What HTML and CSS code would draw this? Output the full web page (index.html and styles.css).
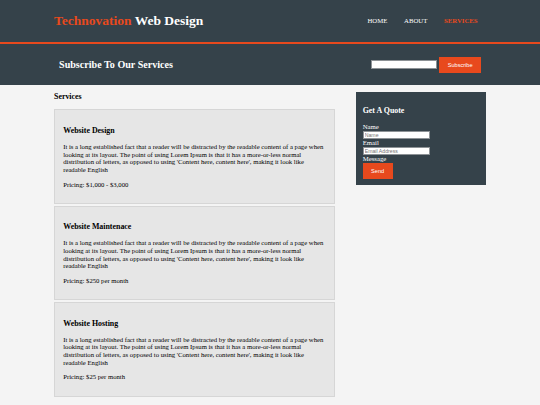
FILE: index.html
```html
<!DOCTYPE html>
<html lang="en">
<head>
<meta charset="utf-8">
<title>Technovation Web Design | Services</title>
<link rel="stylesheet" href="styles.css">
</head>
<body>
<header class="site-header">
  <div class="container header-inner">
    <div class="branding">
      <h1 class="logo"><span class="highlight">Technovation</span> Web Design</h1>
    </div>
    <nav class="main-nav">
      <ul class="nav-list">
        <li class="nav-item"><a class="nav-link" href="#">Home</a></li>
        <li class="nav-item"><a class="nav-link" href="#">About</a></li>
        <li class="nav-item"><a class="nav-link current" href="#">Services</a></li>
      </ul>
    </nav>
  </div>
</header>

<section class="newsletter">
  <div class="container newsletter-inner">
    <h1 class="newsletter-title">Subscribe To Our Services</h1>
    <form class="newsletter-form">
      <input class="email-input" type="email">
      <button class="button-1" type="button">Subscribe</button>
    </form>
  </div>
</section>

<section class="main">
  <div class="container main-inner">
    <article class="main-col">
      <h1 class="page-title">Services</h1>
      <ul class="services">
        <li class="service">
          <h3 class="service-title">Website Design</h3>
          <p class="service-text">It is a long established fact that a reader will be distracted by the readable content of a page when looking at its layout. The point of using Lorem Ipsum is that it has a more-or-less normal distribution of letters, as opposed to using 'Content here, content here', making it look like readable English</p>
          <p class="service-text">Pricing: $1,000 - $3,000</p>
        </li>
        <li class="service">
          <h3 class="service-title">Website Maintenace</h3>
          <p class="service-text">It is a long established fact that a reader will be distracted by the readable content of a page when looking at its layout. The point of using Lorem Ipsum is that it has a more-or-less normal distribution of letters, as opposed to using 'Content here, content here', making it look like readable English</p>
          <p class="service-text">Pricing: $250 per month</p>
        </li>
        <li class="service">
          <h3 class="service-title">Website Hosting</h3>
          <p class="service-text">It is a long established fact that a reader will be distracted by the readable content of a page when looking at its layout. The point of using Lorem Ipsum is that it has a more-or-less normal distribution of letters, as opposed to using 'Content here, content here', making it look like readable English</p>
          <p class="service-text">Pricing: $25 per month</p>
        </li>
      </ul>
    </article>

    <aside class="sidebar">
      <div class="dark">
        <h3 class="quote-title">Get A Quote</h3>
        <form class="quote">
          <label class="quote-label">Name</label>
          <input class="quote-input" type="text" placeholder="Name">
          <label class="quote-label">Email</label>
          <input class="quote-input" type="email" placeholder="Email Address">
          <label class="quote-label">Message</label>
          <button class="button-1 send-button" type="button">Send</button>
        </form>
      </div>
    </aside>
  </div>
</section>
</body>
</html>
```

FILE: styles.css
```css
html, body {
  margin: 0;
  padding: 0;
}

body {
  background: #f4f4f4;
  font-family: "Liberation Serif", "Times New Roman", serif;
  color: #000;
}

.container {
  width: 80%;
  margin: 0 auto;
}

/* Header */
.site-header {
  background: #35424a;
  color: #fff;
  padding-top: 12.7px;
  min-height: 29.3px;
  border-bottom: 2px solid #e8491d;
}

.header-inner {
  display: flex;
  justify-content: space-between;
  align-items: flex-start;
}

.logo {
  margin: 0;
  font-size: 13.5px;
  font-weight: bold;
  line-height: 15.5px;
}

.highlight {
  color: #e8491d;
}

.nav-list {
  display: flex;
  list-style: none;
  margin: 4.2px 0 0;
  padding: 0;
  font-size: 6.75px;
  line-height: 7.76px;
}

.nav-item {
  padding: 0 8.4px;
}

.nav-link {
  color: #fff;
  text-decoration: none;
  text-transform: uppercase;
}

.nav-link.current {
  color: #e8491d;
  font-weight: bold;
}

/* Newsletter */
.newsletter {
  background: #35424a;
  color: #fff;
  padding: 6.3px;
}

.newsletter-inner {
  display: flex;
  justify-content: space-between;
  align-items: flex-start;
}

.newsletter-title {
  margin: 8.4px 0;
  font-size: 10.1px;
  font-weight: bold;
  line-height: 11.6px;
}

.newsletter-form {
  margin-top: 6.3px;
  display: flex;
  align-items: center;
  gap: 2px;
}

.email-input {
  box-sizing: border-box;
  width: 66px;
  height: 8.4px;
  padding: 0;
  border: 1px solid #8d9296;
  background: #fff;
}

.button-1 {
  height: 16px;
  padding: 0 8.4px;
  border: 0;
  background: #e8491d;
  color: #fff;
  font-family: "Liberation Sans", Arial, sans-serif;
  font-size: 5.6px;
}

/* Main */
.main-inner {
  display: flex;
  justify-content: space-between;
  align-items: flex-start;
}

.main-col {
  width: 65%;
}

.page-title {
  margin: 7.2px 0 7.9px;
  font-size: 7.9px;
  font-weight: bold;
  line-height: 9.1px;
}

.services {
  list-style: none;
  margin: 0;
  padding: 0;
}

.service {
  padding: 7.8px 6px 7.8px 8.2px;
  border: 1px solid #d6d6d6;
  margin-bottom: 1.6px;
  background: #e6e6e6;
}

.service-title {
  margin: 7.9px 0;
  font-size: 7.9px;
  font-weight: bold;
  line-height: 9.1px;
}

.service-text {
  margin: 6.75px 0;
  font-size: 6.7px;
  line-height: 7.76px;
}

/* Sidebar */
.sidebar {
  width: 30%;
  margin-top: 3.6px;
}

.dark {
  margin: 3.6px 0;
  padding: 6.3px;
  background: #35424a;
  color: #fff;
}

.quote-title {
  margin: 7.9px 0;
  font-size: 7.9px;
  font-weight: bold;
  line-height: 9.1px;
}

.quote {
  display: flex;
  flex-direction: column;
  align-items: flex-start;
}

.quote-label {
  font-size: 6.75px;
  line-height: 7.76px;
}

.quote-input {
  box-sizing: border-box;
  width: 67px;
  height: 8.2px;
  padding: 0 1px;
  border: 1px solid #8d9296;
  background: #fff;
  font-family: "Liberation Sans", Arial, sans-serif;
  font-size: 5.2px;
}

.quote-input::placeholder {
  color: #757575;
}
```
